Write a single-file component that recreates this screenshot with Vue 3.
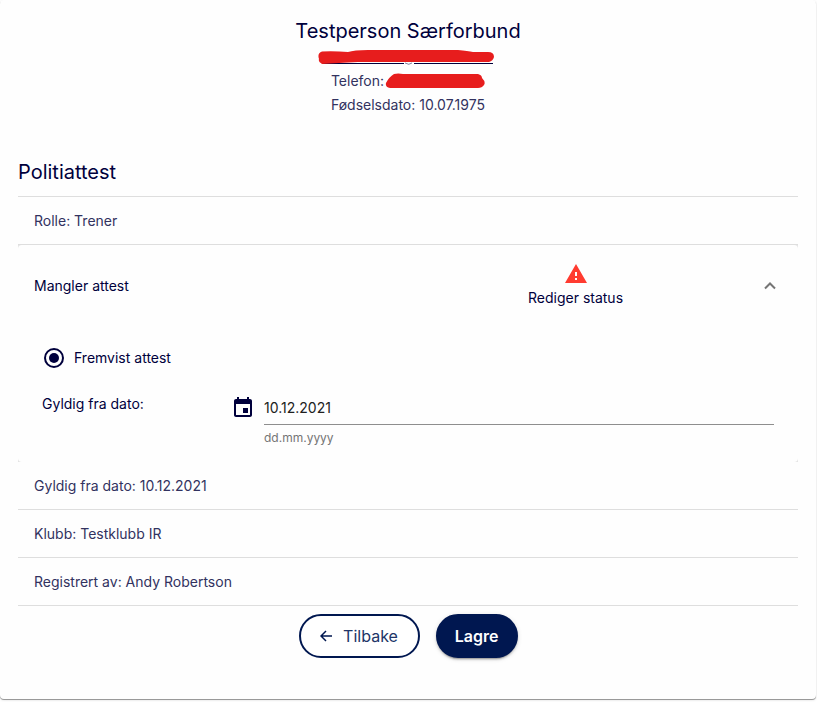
<script setup>
import { ref } from 'vue'

const details = [
  { label: 'Gyldig fra dato', value: '10.12.2021' },
  { label: 'Klubb', value: 'Testklubb IR' },
  { label: 'Registrert av', value: 'Andy Robertson' },
]
const status = ref('fremvist')
const validFrom = ref('10.12.2021')
const open = ref(true)
</script>

<template>
  <main class="page">
    <div class="card">
      <header class="person">
        <h1>Testperson Særforbund</h1>
        <p class="email">
          <svg class="email-mark" viewBox="0 0 180 16" aria-hidden="true">
            <path class="link-line" d="M4 13.5H86M96 13.5H175" />
            <path class="at-tail" d="M87 13q4 2.500 7 0" />
            <path class="redaction" d="M4 1.500Q17 1 30 2Q36 .2 50 0H140Q150 1 155 2H170Q176 2 176 7Q175 11 171 12H40Q20 13 4 14Q0 12 1 9Q-1 3 4 1.500Z" />
          </svg>
        </p>
        <p class="phone">
          <span>Telefon:</span>
          <svg class="phone-mark" viewBox="0 0 101 16" aria-hidden="true">
            <path class="redaction" d="M10 1Q14 0 19 1H94Q98 2 98 5Q102 9 100 12Q98 15 94 15H6Q1 14 2 10Q5 4 10 1Z" />
          </svg>
        </p>
        <p>Fødselsdato: 10.07.1975</p>
      </header>

      <h2>Politiattest</h2>
      <div class="row first">Rolle: Trener</div>

      <section class="panel">
        <div class="panel-surface">
          <button class="panel-head" type="button" :aria-expanded="open" @click="open = !open">
            <span class="panel-title">Mangler attest</span>
            <span class="panel-status">
              <svg class="warning" viewBox="0 0 24 24" aria-hidden="true">
                <path d="M1 21h22L12 2 1 21zm12-3h-2v-2h2v2zm0-4h-2v-4h2v4z" />
              </svg>
              <span>Rediger status</span>
            </span>
            <svg class="chevron" viewBox="0 0 12 8" aria-hidden="true">
              <path d="M1 6.500l5-5 5 5" />
            </svg>
          </button>
          <div v-if="open" class="panel-body">
            <label class="choice">
              <input v-model="status" type="radio" name="status" value="fremvist" />
              <span>Fremvist attest</span>
            </label>
            <div class="date">
              <label for="valid-from">Gyldig fra dato:</label>
              <svg class="calendar" viewBox="0 0 24 24" aria-hidden="true">
                <path d="M17 12h-5v5h5v-5zM16 1v2H8V1H6v2H5c-1.110 0-1.990.9-1.990 2L3 19c0 1.100.89 2 2 2h14c1.100 0 2-.9 2-2V5c0-1.100-.9-2-2-2h-1V1h-2zm3 18H5V8h14v11z" />
              </svg>
              <div class="field">
                <input id="valid-from" v-model="validFrom" type="text" aria-describedby="date-hint" />
                <span id="date-hint">dd.mm.yyyy</span>
              </div>
            </div>
          </div>
        </div>
      </section>

      <div v-for="item in details" :key="item.label" class="row">{{ item.label }}: {{ item.value }}</div>

      <footer class="actions">
        <button class="back" type="button">
          <svg viewBox="0 0 12 12" aria-hidden="true">
            <path d="M12 6H1M6 1L1 6l5 5" />
          </svg>
          <span>Tilbake</span>
        </button>
        <button class="save" type="button">Lagre</button>
      </footer>
    </div>
  </main>
</template>

<style>
body {
  margin: 0;
  background: #fff;
}
</style>

<style scoped>
.page {
  padding: 0 1px 3px 0;
}
.card {
  padding: 16px 18px 41px;
  border-radius: 4px;
  background: #fefefe;
  box-shadow: 0 1px 0 rgba(0, 0, 0, 0.25), 0 1px 1px rgba(0, 0, 0, 0.14), 0 1px 3px rgba(0, 0, 0, 0.12);
  color: #00003c;
  font: 14px/24px Inter, sans-serif;
}
button,
input {
  font: inherit;
  color: inherit;
}
.person {
  display: flex;
  flex-direction: column;
  align-items: center;
  color: #32325f;
}
h1,
h2 {
  margin: 0;
  color: #00003c;
  font-size: 20px;
  line-height: 30px;
  font-weight: 400;
}
.person p {
  display: flex;
  align-items: center;
  height: 24px;
  margin: 0;
}
.person .email {
  height: 23px;
}
.email-mark {
  width: 180px;
  height: 16px;
}
.phone-mark {
  width: 101px;
  height: 16px;
}
.redaction {
  fill: #e71d1d;
}
.link-line,
.at-tail {
  fill: none;
  stroke: #00003c;
}
.at-tail {
  opacity: 0.5;
}
h2 {
  margin-top: 40px;
  padding-bottom: 9px;
}
.row {
  padding: 12px 16px 11px;
  border-bottom: 1px solid #dedede;
  color: #32325f;
}
.first {
  border-top: 1px solid #dedede;
}
.panel {
  background: #e4e4e4;
}
.panel-surface {
  padding-bottom: 10px;
  border-radius: 4px;
  background: #fefefe;
}
.panel-head {
  box-sizing: border-box;
  display: grid;
  grid-template-columns: 1fr 228px 26px;
  align-items: center;
  width: 100%;
  height: 82px;
  padding: 0 16px;
  border: 0;
  background: none;
  text-align: left;
}
.panel-status {
  display: flex;
  flex-direction: column;
  align-items: center;
  justify-self: start;
}
.warning {
  width: 24px;
  height: 24px;
  fill: #ff3b30;
}
.chevron {
  justify-self: end;
  width: 12px;
  height: 8px;
  margin-right: 6px;
  fill: none;
  stroke: #757575;
  stroke-width: 2;
}
.panel-body {
  padding: 19px 24px 0;
}
.choice {
  display: flex;
  align-items: center;
  gap: 10px;
  width: max-content;
  margin-left: 2px;
}
.choice input {
  appearance: none;
  box-sizing: border-box;
  width: 20px;
  height: 20px;
  margin: 0;
  border: 2px solid #00003c;
  border-radius: 50%;
}
.choice input:checked {
  background: #00003c content-box;
  padding: 3px;
}
.date {
  display: grid;
  grid-template-columns: 189px 24px 1fr;
  margin-top: 22px;
}
.calendar {
  width: 24px;
  height: 24px;
  margin-top: 4px;
  fill: #00003c;
}
.field {
  display: flex;
  flex-direction: column;
  min-width: 0;
  margin-left: 9px;
}
.field input {
  box-sizing: border-box;
  width: 100%;
  height: 33px;
  padding: 0 0 1px;
  border: 0;
  border-bottom: 1px solid #8e8e8e;
  background: none;
  color: #202020;
  outline: 0;
}
.field span {
  color: #757575;
  font-size: 12px;
  line-height: 26px;
  padding-bottom: 1px;
}
.actions {
  display: flex;
  justify-content: center;
  gap: 16px;
  margin-top: 8px;
}
.actions button {
  display: flex;
  align-items: center;
  justify-content: center;
  box-sizing: border-box;
  height: 44px;
  border: 2px solid #001750;
  border-radius: 22px;
  font-size: 16px;
}
.actions .back {
  gap: 11px;
  min-width: 121px;
  padding: 0 18px;
  background: #fff;
  color: #213568;
}
.back svg {
  width: 12px;
  height: 12px;
  fill: none;
  stroke: #001750;
  stroke-width: 1.5;
}
.actions .save {
  min-width: 82px;
  padding: 0 16px;
  background: #001750;
  color: #fff;
  font-weight: 600;
  box-shadow: 0 3px 1px -2px rgba(0, 0, 0, 0.2), 0 2px 2px rgba(0, 0, 0, 0.14), 0 1px 5px rgba(0, 0, 0, 0.12);
}
</style>
